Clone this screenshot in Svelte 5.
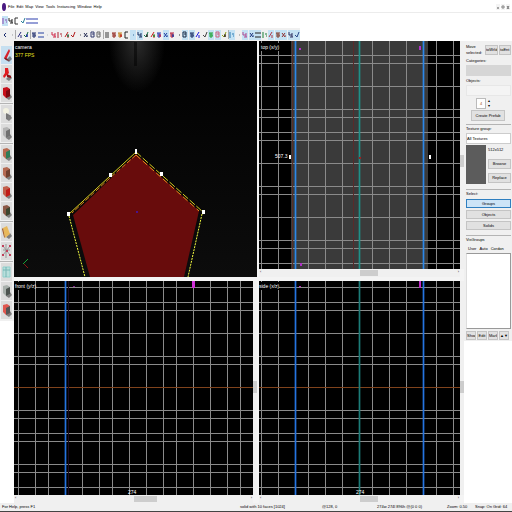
<script>
	const menus = ['File', 'Edit', 'Map', 'View', 'Tools', 'Instancing', 'Window', 'Help'];

	// small glyphs, drawn in a 6x8 box
	const glyphs = {
		back: 'M4 2L2 4L4 6',
		dot: 'M3 4h1',
		cut: 'M1 2l3 4M4 2L1 6M4 5h1',
		page: 'M1 1h3v5h-3zM2 3h2',
		bracket: 'M4 1h-3v6h3',
		bar: 'M1 1v6M3 3h2M4 5h1',
		arrow: 'M1 1v3h3M4 2v4M2 6h3',
		grid: 'M1 2h4M1 4h4M1 6h4M2 1v6M4 1v6',
		slash: 'M1 6L4 1M4 4v3',
		block: 'M1 2h4M1 3h3M2 4h3M1 5h4M2 6h2',
		tick: 'M1 4l2 2L5 1',
		pairs: 'M1 1v2M4 1v2M1 5v2M4 5v2M2 2h1M5 2h1M2 6h1M5 6h1'
	};

	const fileBar = [
		{ g: 'bar', c: '#8a4bb0', on: true, name: 'New' },
		{ g: 'arrow', c: '#222', name: 'Open' },
		{ g: 'bracket', c: '#333', name: 'Save' },
		{ g: 'tick', c: '#2b7f9a', name: 'Export' },
		{ g: 'pairs', c: '#2d3fae', name: 'Tile' },
		{ g: 'pairs', c: '#2d3fae', name: 'Cascade' }
	];

	const mapBar = [
		{ g: 'back', c: '#1a2a6c', name: 'Undo' },
		{ g: 'dot', c: '#999', name: 'Redo' },
		null,
		{ g: 'slash', c: '#2a2a7c', name: 'Carve' },
		{ g: 'tick', c: '#16703a', c2: '#1c2ab0', name: 'Group' },
		null,
		{ g: 'block', c: '#1c2a6a', name: 'Ungroup' },
		{ g: 'pairs', c: '#2540a0', name: 'Ignore groups' },
		{ g: 'dot', c: '#bbb', name: 'Hide' },
		{ g: 'arrow', c: '#d02848', name: 'Hide unselected' },
		{ g: 'bar', c: '#b02030', name: 'Show' },
		{ g: 'slash', c: '#c02020', c2: '#207040', name: 'Cordon' },
		{ g: 'tick', c: '#b01818', name: 'Edit cordon' },
		{ g: 'dot', c: '#555', name: 'Radius' },
		{ g: 'cut', c: '#222a50', name: 'Cut' },
		{ g: 'page', c: '#333a70', name: 'Copy' },
		{ g: 'page', c: '#666', name: 'Paste' },
		null,
		{ g: 'grid', c: '#777', name: 'Grid' },
		{ g: 'block', c: '#902018', name: 'Texture lock' },
		{ g: 'block', c: '#c08018', c2: '#c02020', name: 'Scale lock' },
		{ g: 'bracket', c: '#222', name: 'Align' },
		{ g: 'dot', c: '#3a6a9a', on: true, name: 'Select' },
		{ g: 'arrow', c: '#1c3060', on: true, name: 'Move' },
		{ g: 'tick', c: '#158050', c2: '#222', name: 'Helpers' },
		{ g: 'slash', c: '#d02020', c2: '#208020', name: 'Models' },
		{ g: 'block', c: '#2638b0', c2: '#c02050', name: 'Fade' },
		{ g: 'cut', c: '#2040a0', on: true, name: 'Sprites' },
		{ g: 'block', c: '#b01838', c2: '#2038a0', name: 'Collision' },
		{ g: 'dot', c: '#333', name: 'Detail' },
		{ g: 'page', c: '#1a2a44', on: true, name: 'Nodraw' },
		{ g: 'block', c: '#182a60', on: true, name: 'Run map' },
		{ g: 'slash', c: '#1818e0', name: 'Displacement' },
		{ g: 'tick', c: '#444', name: 'Walkable' },
		{ g: 'block', c: '#18a030', on: true, name: 'Buildable' },
		{ g: 'page', c: '#d06080', on: true, name: 'Sky' },
		{ g: 'tick', c: '#90a018', c2: '#302020', name: 'Mask' },
		null,
		{ g: 'bar', c: '#2878b0', on: true, name: 'Alpha' },
		{ g: 'dot', c: '#888', name: 'Smooth' },
		{ g: 'arrow', c: '#b04890', on: true, name: 'Sew' },
		{ g: 'cut', c: '#203880', on: true, name: 'Noise' },
		{ g: 'pairs', c: '#222', on: true, name: 'Subdivide' },
		{ g: 'bar', c: '#188038', name: 'Invert' },
		{ g: 'slash', c: '#b03848', on: true, name: 'Lift' },
		{ g: 'block', c: '#803828', on: true, name: 'Paint' },
		{ g: 'cut', c: '#903030', on: true, name: 'Sculpt' },
		{ g: 'arrow', c: '#303060', on: true, name: 'Instances' },
		{ g: 'tick', c: '#28488a', on: true, name: 'Manifest' }
	];

	const tools = [
		{ name: 'Selection', kind: 'pointer', a: '#d8222a', b: '#7a1a20', on: true },
		{ name: 'Magnify', kind: 'lens', a: '#e01c20', b: '#901015' },
		{ name: 'Camera', kind: 'cube', a: '#c8101a', b: '#7c0810', end: true },
		{ name: 'Entity', kind: 'lamp', a: '#f3f2e2', b: '#777' },
		{ name: 'Block', kind: 'cube', a: '#b4b4b4', b: '#707070', end: true },
		{ name: 'Texture application', kind: 'cube', a: '#b86a50', b: '#2f7c58' },
		{ name: 'Apply texture', kind: 'cube', a: '#b56a52', b: '#70402f' },
		{ name: 'Decals', kind: 'cube', a: '#c0604c', b: '#c01c18' },
		{ name: 'Overlays', kind: 'cube', a: '#8c5a48', b: '#3d4630', end: true },
		{ name: 'Clipping', kind: 'slab', a: '#e8b85a', b: '#a05820' },
		{ name: 'Vertex', kind: 'nodes', a: '#c0405a', b: '#999', end: true },
		{ name: 'Path', kind: 'frame', a: '#8ed0cc', b: '#4f9c9c' },
		{ name: 'Ground', kind: 'cube', a: '#a8b0ac', b: '#4d5450' },
		{ name: 'Morph', kind: 'cube', a: '#e05850', b: '#555' }
	];

	const colsWide = [18, 35, 48, 82, 99, 112, 129, 146, 163, 176, 193, 210, 227, 240];
	const colsSide = [261, 278, 308, 325, 342, 372, 389, 406, 436, 453];
	const rowsTop = [55, 63, 86, 109, 117, 132, 140, 163, 186, 194, 217, 240, 248, 263];
	const rowsLow = [287, 302, 310, 333, 356, 364, 410, 418, 433, 441, 464, 472, 487];

	const handles = [[135, 149, 2, 5], [109, 173, 3, 4], [160, 172, 3, 4], [67, 212, 3, 4], [202, 210, 3, 4]];

	let selectMode = $state('Groups');
	let faces = $state(4);
</script>

{#snippet icon(item)}
	<button class="tb" class:on={item.on} aria-label={item.name}>
		<svg viewBox="0 0 6 8">
			<path d={glyphs[item.g]} stroke={item.c} />
			{#if item.c2}<path d="M3 5h2M4 3v3" stroke={item.c2} />{/if}
		</svg>
	</button>
{/snippet}

{#snippet lines(cols, rows, x0, x1, y0, y1)}
	<g fill="#8a8a8a">
		{#each rows as y}<rect x={x0} {y} width={x1 - x0} height="1" />{/each}
		{#each cols as x}<rect {x} y={y0} width="1" height={y1 - y0} />{/each}
	</g>
{/snippet}

{#snippet guide(x, y, height, color)}
	<g fill={color}>
		<rect x={x - 1} {y} width="3" {height} opacity=".35" />
		<rect {x} {y} width="1" {height} />
	</g>
{/snippet}

{#snippet vscroll(start)}
	<div class="vscroll"><span style="margin-top: {start}"></span></div>
{/snippet}

{#snippet hscroll(start, size)}
	<div class="hscroll"><b>‹</b><span style="left: {start}; width: {size}"></span><b>›</b></div>
{/snippet}

<div class="app">
	<nav class="menu">
		<svg class="logo" viewBox="0 0 4 8"><ellipse cx="2" cy="4" rx="2" ry="4" fill="#4b1a82" /></svg>
		{#each menus as m}<button>{m}</button>{/each}
		<div class="win">
			<button aria-label="Minimize"><svg viewBox="0 0 4 6"><path d="M1 4h2" stroke="#555" /></svg></button>
			<button aria-label="Restore"><svg viewBox="0 0 4 6"><path d="M1 2h2v2h-2z" stroke="#888" /></svg></button>
			<button aria-label="Close"><svg viewBox="0 0 4 6"><path d="M1 2l2 3M3 2l-2 3" stroke="#777" /></svg></button>
		</div>
	</nav>

	<div class="bar first">
		{#each fileBar as item}{@render icon(item)}{/each}
	</div>
	<div class="bar second">
		{#each mapBar as item}
			{#if item}{@render icon(item)}{:else}<i class="sep"></i>{/if}
		{/each}
	</div>

	<main>
		<div class="left">
			<div class="tools">
				{#each tools as t}
					<button class="tool" class:on={t.on} aria-label={t.name}>
						<svg viewBox="0 0 11 18">
							{#if t.kind !== 'nodes' && t.kind !== 'frame'}
								<path d="M5 14l4-4l2 3l-3 3z" fill="#555" opacity=".7" />
							{/if}
							{#if t.kind === 'pointer'}
								<path d="M8 3L3 12L5 14L9 5z" fill={t.a} /><path d="M3 12l2 2l4 1l-4-3z" fill={t.b} />
							{:else if t.kind === 'lens'}
								<path d="M4 3h3l1 5l-2 2l-3 3l-1-2l2-3z" fill={t.a} /><path d="M6 9l4 2v2l-4-1z" fill={t.b} />
							{:else if t.kind === 'lamp'}
								<circle cx="5" cy="6" r="3" fill={t.a} /><path d="M5 8l2 1v5h-2zM7 9l3 2l-3 1z" fill={t.b} />
							{:else if t.kind === 'slab'}
								<path d="M2 5l4-2l3 8l-5 4z" fill={t.a} /><path d="M2 5l2 10l-1-1l-2-8z" fill={t.b} />
							{:else if t.kind === 'nodes'}
								<path d="M2 4l7 9M9 4L2 13M5 2v14M2 8h7" stroke={t.b} fill="none" />
								<path d="M1 3h2v2h-2zM8 3h2v2h-2zM1 12h2v2h-2zM8 12h2v2h-2zM5 8h2v2h-2z" fill={t.a} />
							{:else if t.kind === 'frame'}
								<path d="M2 4h7v10h-7z" fill="#b9dfdc" stroke={t.a} /><path d="M2 7h7M5 4v10" stroke={t.b} opacity=".6" />
							{:else}
								<path d="M2 4l4-1l3 2v7l-4 2l-3-3z" fill={t.a} />
								<path d="M5 7l4-2v7l-4 2z" fill={t.b} />
							{/if}
						</svg>
					</button>
					{#if t.end}<hr />{/if}
				{/each}
			</div>
		</div>

		<div class="views">
			<section class="view">
				<svg viewBox="14 41 243 236" preserveAspectRatio="xMidYMid slice">
					<defs>
						<radialGradient id="smoke">
							<stop offset="0" stop-color="#2c2c2c" />
							<stop offset="1" stop-color="#2c2c2c" stop-opacity="0" />
						</radialGradient>
						<linearGradient id="dark" x1="0" y1="0" x2="0" y2="1">
							<stop offset="0" stop-color="#000" />
							<stop offset="1" stop-color="#0c0c0c" />
						</linearGradient>
					</defs>
					<rect x="14" y="41" width="243" height="236" fill="url(#dark)" />
					<ellipse cx="137" cy="42" rx="28" ry="50" fill="url(#smoke)" />
					<rect x="134" y="42" width="3" height="24" fill="#000" opacity=".5" />
					<path d="M136 154L199 211L184 277H90L73 215z" fill="#680c0c" />
					<g fill="none">
						<path d="M136 152L69 214" stroke="#d8d020" />
						<path d="M136 155L110 178L72 213" stroke="#e08018" stroke-dasharray="5 2" />
						<path d="M136 152L203 212" stroke="#d8d020" stroke-dasharray="7 2" />
						<path d="M136 155L199 211" stroke="#f09018" stroke-dasharray="6 3" />
						<path d="M69 216L85 277M202 214L188 277" stroke="#f4fc40" stroke-dasharray="2 1" />
					</g>
					{#each handles as [x, y, w, h]}<rect {x} {y} width={w} height={h} fill="#fff" />{/each}
					<rect x="136" y="211" width="2" height="2" fill="#4a148c" />
					<path d="M23 264L28 259" stroke="#18a038" /><path d="M24 264l4 4" stroke="#8a1414" />
					<text x="15" y="49" fill="#fff">camera</text>
					<text x="15" y="57" fill="#e8e020">377 FPS</text>
				</svg>
			</section>

			<section class="view flat">
				<svg viewBox="259 41 201 228" preserveAspectRatio="xMidYMid slice">
					<rect x="259" y="41" width="201" height="228" fill="#000" />
					<rect x="291" y="41" width="137" height="228" fill="#3a3a3a" />
					{@render lines(colsSide, rowsTop, 259, 460, 41, 269)}
					<rect x="292" y="41" width="1" height="228" fill="#5a3028" />
					<rect x="353" y="41" width="1" height="228" fill="#5a2a2a" />
					{@render guide(359, 41, 228, '#209088')}
					{@render guide(295, 41, 228, '#2c88e8')}
					{@render guide(423, 41, 228, '#2c88e8')}
					<path d="M299 48h2v2h-2zM419 46h2v4h-2zM300 263h2v3h-2z" fill="#b030c8" />
					<rect x="359" y="157" width="2" height="2" fill="#a02020" />
					<path d="M289 155h2v4h-2zM429 155h2v4h-2z" fill="#fff" />
					<rect x="260" y="43" width="20" height="8" fill="#000" />
					<text x="261" y="49" fill="#fff">top (x/y)</text>
					<text x="275" y="158" fill="#fff">507.3</text>
				</svg>
				{@render vscroll('114px')}
				{@render hscroll('50%', '9%')}
			</section>

			<section class="view flat">
				<svg viewBox="14 281 239 214" preserveAspectRatio="xMidYMid slice">
					<rect x="14" y="281" width="239" height="214" fill="#000" />
					{@render lines(colsWide, rowsLow, 14, 253, 281, 495)}
					<rect x="14" y="387" width="239" height="1" fill="#80431c" />
					{@render guide(65, 281, 214, '#2474e0')}
					<rect x="68" y="281" width="1" height="214" fill="#1c0a20" />
					<rect x="192" y="281" width="3" height="7" fill="#d030d8" />
					<rect x="73" y="286" width="2" height="1" fill="#80208c" />
					<rect x="14" y="282" width="21" height="8" fill="#000" />
					<text x="15" y="288" fill="#fff">front (y/z)</text>
					<text x="128" y="494" fill="#fff">274</text>
				</svg>
				{@render vscroll('100px')}
				{@render hscroll('50%', '10%')}
			</section>

			<section class="view flat">
				<svg viewBox="259 281 201 214" preserveAspectRatio="xMidYMid slice">
					<rect x="259" y="281" width="201" height="214" fill="#000" />
					{@render lines(colsSide, rowsLow, 259, 460, 281, 495)}
					<rect x="259" y="387" width="201" height="1" fill="#80431c" />
					{@render guide(359, 281, 214, '#1c7c78')}
					{@render guide(295, 281, 214, '#2474e0')}
					{@render guide(423, 281, 214, '#2474e0')}
					<path d="M419 281h2v7h-2zM299 286h2v1h-2z" fill="#c028c8" />
					<rect x="259" y="282" width="20" height="8" fill="#000" />
					<text x="259" y="288" fill="#fff">side (x/z)</text>
					<text x="356" y="494" fill="#fff">274</text>
				</svg>
				{@render vscroll('100px')}
				{@render hscroll('50%', '9%')}
			</section>
		</div>

		<aside>
			<div class="panel">
				<div class="row move">
					<span>Move selected:</span>
					<button>toWrld</button>
					<button>toEnt</button>
				</div>
				<label for="cat">Categories:</label>
				<select id="cat" class="off" disabled><option></option></select>
				<label for="obj">Objects:</label>
				<select id="obj" class="pale" disabled><option></option></select>
				<div class="row faces">
					<input type="text" aria-label="Faces" bind:value={faces} />
					<span class="spin">
						<button aria-label="More" onclick={() => faces++}>▴</button>
						<button aria-label="Fewer" onclick={() => faces--}>▾</button>
					</span>
				</div>
				<button class="prefab">Create Prefab</button>
				<hr />
				<label for="tex">Texture group:</label>
				<select id="tex"><option>All Textures</option></select>
				<div class="row texture">
					<div class="swatch"></div>
					<div class="side">
						<span>512x512</span>
						<button>Browse</button>
						<button>Replace</button>
					</div>
				</div>
				<hr />
				<span class="title">Select:</span>
				<div class="modes">
					{#each ['Groups', 'Objects', 'Solids'] as mode}
						<button class:active={selectMode === mode} onclick={() => (selectMode = mode)}>{mode}</button>
					{/each}
				</div>
				<hr />
				<span class="title">VisGroups</span>
				<div class="row tabs">
					<button>User</button><button>Auto</button><button>Cordon</button>
				</div>
				<div class="list"></div>
				<div class="row actions">
					<button>Show</button><button>Edit</button><button>Mark</button><button>▲▼</button>
				</div>
			</div>
		</aside>
	</main>

	<footer>
		<span>For Help, press F1</span>
		<span>solid with 10 faces [1024]</span>
		<span>@128, 0</span>
		<span>274w 274l 896h @(0 0 0)</span>
		<span>Zoom: 0.50</span>
		<span>Snap: On Grid: 64</span>
	</footer>
</div>

<style>
	:global(body) {
		background: #fff;
	}

	.app {
		display: flex;
		flex-direction: column;
		height: 100vh;
		overflow: hidden;
		font: 4px/6px 'Liberation Sans', Arial, sans-serif;
		color: #000;
	}

	.app * {
		box-sizing: border-box;
	}

	button,
	input,
	select {
		margin: 0;
		padding: 0;
		border: 0;
		border-radius: 0;
		background: none;
		font: inherit;
		color: inherit;
		appearance: none;
	}

	svg {
		display: block;
	}

	text {
		font-size: 5px;
	}

	.menu {
		display: flex;
		flex: none;
		align-items: center;
		gap: 2px;
		height: 13px;
		padding: 2px 2px 0;
		border-bottom: 1px solid #ececec;
	}

	.logo {
		width: 4px;
		height: 8px;
	}

	.win {
		display: flex;
		gap: 1px;
		margin-left: auto;
	}

	.win svg {
		width: 4px;
		height: 6px;
		fill: none;
		background: #f4f4f4;
	}

	.bar {
		display: flex;
		flex: none;
		align-items: center;
		padding-left: 2px;
	}

	.bar.first {
		height: 15px;
	}

	.bar.second {
		height: 13px;
		width: 300px;
		justify-content: space-between;
		background: #f0f0f0;
	}

	.tb {
		width: 6px;
		height: 10px;
		padding: 1px 0;
		flex: none;
	}

	.tb.on {
		background: #c4e2f4;
	}

	.tb svg {
		width: 6px;
		height: 8px;
		fill: none;
	}

	.sep {
		width: 1px;
		height: 9px;
		background: #aaa;
	}

	main {
		display: flex;
		flex: 1;
		min-height: 0;
	}

	.left {
		width: 14px;
		flex: none;
	}

	.tools {
		display: flex;
		flex-direction: column;
		align-items: center;
		gap: 1px;
		padding: 5px 1px 2px 0;
		background: #f0f0f0;
	}

	.tools hr,
	.panel hr {
		width: 100%;
		height: 1px;
		margin: 0;
		border: 0;
		background: #b4b4b4;
	}

	.tool {
		width: 11px;
		height: 18px;
		background: #dcdcdc;
	}

	.tool.on {
		background: #c6dff0;
	}

	.tool svg {
		width: 11px;
		height: 18px;
	}

	.views {
		display: grid;
		flex: 1;
		grid-template-columns: 243fr 205fr;
		grid-template-rows: 236fr 222fr;
		gap: 4px 2px;
		min-width: 0;
		background: #f4f4f4;
	}

	.view {
		min-width: 0;
		min-height: 0;
		overflow: hidden;
	}

	.view svg {
		width: 100%;
		height: 100%;
	}

	.flat {
		display: grid;
		grid-template-columns: 1fr 4px;
		grid-template-rows: minmax(0, 1fr) 8px;
	}

	.vscroll,
	.hscroll {
		background: #f0f0f0;
	}

	.vscroll span {
		display: block;
		height: 12px;
		background: #cdcdcd;
	}

	.hscroll {
		position: relative;
		display: flex;
		justify-content: space-between;
		padding: 0 1px;
		color: #555;
	}

	.hscroll span {
		position: absolute;
		top: 1px;
		bottom: 1px;
		background: #cdcdcd;
	}

	aside {
		flex: none;
		width: 48px;
	}

	.panel {
		display: flex;
		flex-direction: column;
		padding: 2px 1px 1px 2px;
		background: #f0f0f0;
	}

	.panel button {
		text-align: center;
	}

	.row {
		display: flex;
	}

	.move {
		gap: 1px;
		height: 14px;
		align-items: center;
	}

	.move span {
		width: 18px;
	}

	.move button,
	.prefab,
	.side button,
	.modes button,
	.actions button {
		background: #e1e1e1;
		border: 1px solid #c4c4c4;
		line-height: 6px;
	}

	.move button {
		flex: 1;
		height: 10px;
		overflow: hidden;
	}

	label,
	.title {
		height: 8px;
		line-height: 8px;
	}

	select {
		height: 11px;
		background: #fff;
		border: 1px solid #ccc;
	}

	select.off {
		background: #ccc;
	}

	select.pale {
		background: #f6f6f6;
		border-color: #e4e4e4;
	}

	.off,
	.pale {
		margin-bottom: 1px;
	}

	.faces {
		height: 13px;
		padding: 1px 0 1px 10px;
	}

	.faces input {
		width: 10px;
		border: 1px solid #bbb;
		background: #fff;
		text-align: center;
		color: #a04a10;
	}

	.spin {
		display: flex;
		flex-direction: column;
	}

	.spin button {
		height: 5px;
		width: 5px;
		line-height: 5px;
	}

	.prefab {
		height: 11px;
		margin: 0 6px 3px 5px;
	}

	.texture {
		gap: 2px;
		padding: 1px 0 5px;
	}

	.swatch {
		width: 20px;
		height: 39px;
		background: #5c5c5c;
	}

	.side {
		display: flex;
		flex: 1;
		flex-direction: column;
		gap: 4px;
	}

	.side span {
		height: 10px;
		line-height: 10px;
	}

	.side button {
		height: 10px;
	}

	.modes {
		display: flex;
		flex-direction: column;
		gap: 2px;
		padding: 1px 0 5px;
	}

	.modes button {
		height: 9px;
	}

	.modes button.active {
		background: #cce4f7;
		border-color: #2f7fc0;
	}

	.tabs {
		gap: 3px;
		height: 9px;
		padding-left: 2px;
	}

	.list {
		height: 76px;
		background: #fff;
		border: 1px solid #999;
		border-left-color: #ddd;
	}

	.actions {
		gap: 1px;
		padding-top: 2px;
	}

	.actions button {
		width: 10px;
		height: 9px;
		overflow: hidden;
	}

	footer {
		display: grid;
		flex: none;
		grid-template-columns: 238fr 82fr 55fr 70fr 28fr 37fr;
		align-items: center;
		height: 9px;
		padding-left: 2px;
		background: #f0f0f0;
		border-bottom: 1px solid #444;
		white-space: nowrap;
	}
</style>
